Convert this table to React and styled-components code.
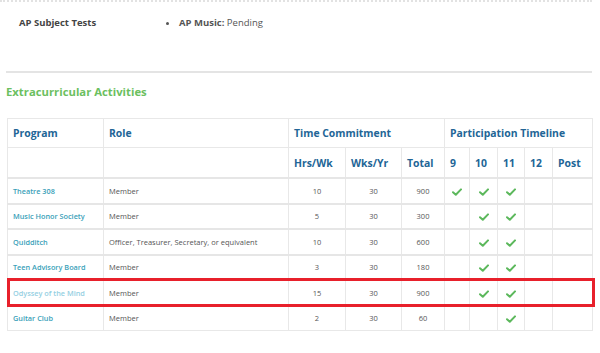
import styled, { createGlobalStyle } from "styled-components";

const GlobalStyle = createGlobalStyle`
  body {
    margin: 0;
    background: #fff;
    font-family: "Open Sans", "Liberation Sans", sans-serif;
  }
`;

const Page = styled.div`
  width: 600px;
  height: 353px;
  overflow: hidden;
`;

const TestsSection = styled.section`
  width: 592px;
  border-top: 2px dotted #e2e2e2;
  display: grid;
  grid-template-columns: 148px 1fr;
  padding: 14px 0 0 19px;
  box-sizing: border-box;
  height: 71px;
`;

const TestsLabel = styled.div`
  font-size: 9.5px;
  font-weight: 700;
  color: #444;
`;

const BulletList = styled.ul`
  margin: 0;
  padding: 0 0 0 12px;
  font-size: 9.5px;
  color: #555;
  li::marker {
    font-size: 9px;
  }
`;

const Divider = styled.hr`
  margin: 0 0 0 6px;
  width: 586px;
  border: none;
  border-top: 2px solid #e4e4e4;
`;

const SectionTitle = styled.h2`
  margin: 0;
  padding: 11px 0 0 6px;
  height: 45px;
  box-sizing: border-box;
  font-size: 11.3px;
  font-weight: 700;
  color: #6cbf5f;
`;

const Table = styled.table`
  margin-left: 7px;
  width: 585px;
  table-layout: fixed;
  border-collapse: collapse;
  border: 1px solid #e8e8e8;
`;

const HeadCell = styled.th`
  border: 1px solid #e8e8e8;
  text-align: left;
  padding: 0 5px;
  height: ${(p) => p.$h}px;
  font-size: 10.4px;
  font-weight: 700;
  color: #226596;
  white-space: nowrap;
`;

const Row = styled.tr`
  border-top: 2px solid #e6e6e6;
`;

const Cell = styled.td`
  position: relative;
  border-left: 1px solid #e8e8e8;
  border-right: 1px solid #e8e8e8;
  height: 23.5px;
  padding: 0 ${(p) => (p.$center ? 0 : 5)}px;
  text-align: ${(p) => (p.$center ? "center" : "left")};
  font-size: 7.5px;
  color: #555;
  white-space: nowrap;
`;

const ProgramLink = styled.a`
  color: ${(p) => (p.$visited ? "#95cfe2" : "#3a9fb9")};
  font-size: 7.3px;
  font-weight: 600;
  text-decoration: none;
`;

const Highlight = styled.span`
  position: absolute;
  left: -1px;
  top: -3px;
  width: 588px;
  height: 29px;
  box-sizing: border-box;
  border: 3px solid #e8202b;
  pointer-events: none;
`;

const Check = () => (
  <svg width="10" height="8" viewBox="0 0 10 8" style={{ verticalAlign: "middle" }}>
    <path d="M1 4.2 L3.8 6.8 L9 1.4" fill="none" stroke="#5cb85c" strokeWidth="2" strokeLinecap="round" strokeLinejoin="round" />
  </svg>
);

const widths = [96, 185, 57, 56, 43, 25, 28, 27, 28, 40];

const activities = [
  { name: "Theatre 308", role: "Member", hrs: 10, wks: 30, total: 900, years: [9, 10, 11] },
  { name: "Music Honor Society", role: "Member", hrs: 5, wks: 30, total: 300, years: [10, 11] },
  { name: "Quidditch", role: "Officer, Treasurer, Secretary, or equivalent", hrs: 10, wks: 30, total: 600, years: [10, 11] },
  { name: "Teen Advisory Board", role: "Member", hrs: 3, wks: 30, total: 180, years: [10, 11] },
  { name: "Odyssey of the Mind", role: "Member", hrs: 15, wks: 30, total: 900, years: [10, 11], highlight: true },
  { name: "Guitar Club", role: "Member", hrs: 2, wks: 30, total: 60, years: [11] },
];

const grades = [9, 10, 11, 12, "Post"];

export default function App() {
  return (
    <Page>
      <GlobalStyle />
      <TestsSection>
        <TestsLabel>AP Subject Tests</TestsLabel>
        <BulletList>
          <li>
            <b>AP Music:</b> Pending
          </li>
        </BulletList>
      </TestsSection>
      <Divider />
      <SectionTitle>Extracurricular Activities</SectionTitle>

      <Table>
        <colgroup>
          {widths.map((w, i) => (
            <col key={i} style={{ width: w }} />
          ))}
        </colgroup>
        <thead>
          <tr>
            <HeadCell $h={28}>Program</HeadCell>
            <HeadCell $h={28}>Role</HeadCell>
            <HeadCell $h={28} colSpan={3}>Time Commitment</HeadCell>
            <HeadCell $h={28} colSpan={5}>Participation Timeline</HeadCell>
          </tr>
          <tr>
            <HeadCell $h={29} />
            <HeadCell $h={29} />
            <HeadCell $h={29}>Hrs/Wk</HeadCell>
            <HeadCell $h={29}>Wks/Yr</HeadCell>
            <HeadCell $h={29}>Total</HeadCell>
            {grades.map((g) => (
              <HeadCell $h={29} key={g}>{g}</HeadCell>
            ))}
          </tr>
        </thead>
        <tbody>
          {activities.map((a) => (
            <Row key={a.name}>
              <Cell>
                {a.highlight && <Highlight />}
                <ProgramLink href="#" $visited={a.highlight}>{a.name}</ProgramLink>
              </Cell>
              <Cell>{a.role}</Cell>
              <Cell $center>{a.hrs}</Cell>
              <Cell $center>{a.wks}</Cell>
              <Cell $center>{a.total}</Cell>
              {grades.map((g) => (
                <Cell $center key={g}>{a.years.includes(g) && <Check />}</Cell>
              ))}
            </Row>
          ))}
        </tbody>
      </Table>
    </Page>
  );
}
